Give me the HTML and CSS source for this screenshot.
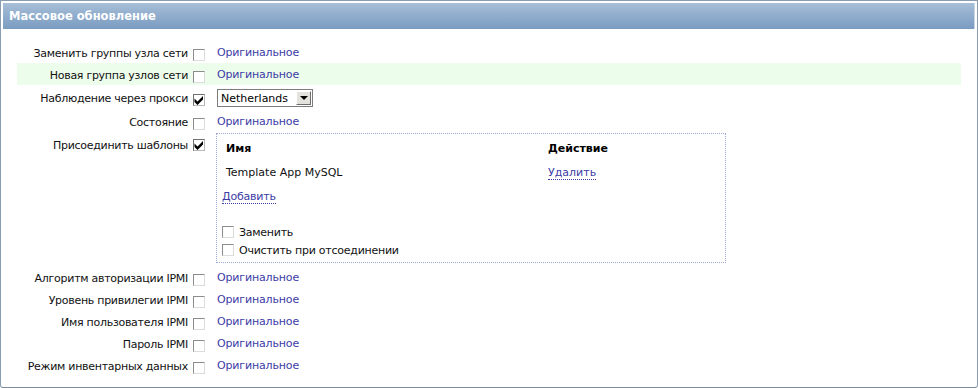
FILE: index.html
```html
<!DOCTYPE html>
<html lang="ru">
<head>
    <meta charset="UTF-8">
    <title>Массовое обновление</title>
    <link rel="stylesheet" href="styles.css">
</head>
<body>
    <div class="frame">
        <div class="header">Массовое обновление</div>
        <div class="form">
            <div class="row">
                <div class="label">Заменить группы узла сети</div>
                <span class="cb"></span>
                <a href="#" class="val">Оригинальное</a>
            </div>
            <div class="row alt">
                <div class="label">Новая группа узлов сети</div>
                <span class="cb"></span>
                <a href="#" class="val">Оригинальное</a>
            </div>
            <div class="row tall">
                <div class="label">Наблюдение через прокси</div>
                <span class="cb checked">
                    <svg width="12" height="12" viewBox="0 0 12 12"><path d="M1.5 4.5 L4.5 7.5 L10 2 L10 5.5 L4.5 11 L1.5 8 Z" fill="#000"/></svg>
                </span>
                <div class="select">
                    <span class="select-text">Netherlands</span>
                    <span class="arrow"><i></i></span>
                </div>
            </div>
            <div class="row tall">
                <div class="label">Состояние</div>
                <span class="cb"></span>
                <a href="#" class="val">Оригинальное</a>
            </div>
            <div class="row top">
                <div class="label">Присоединить шаблоны</div>
                <span class="cb checked">
                    <svg width="12" height="12" viewBox="0 0 12 12"><path d="M1.5 4.5 L4.5 7.5 L10 2 L10 5.5 L4.5 11 L1.5 8 Z" fill="#000"/></svg>
                </span>
                <div class="tpl-box">
                    <div class="tpl-row tpl-head">
                        <span>Имя</span>
                        <span>Действие</span>
                    </div>
                    <div class="tpl-row tpl-data">
                        <span>Template App MySQL</span>
                        <span><a href="#" class="link">Удалить</a></span>
                    </div>
                    <div class="tpl-add"><a href="#" class="link">Добавить</a></div>
                    <div class="tpl-check"><span class="cb"></span>Заменить</div>
                    <div class="tpl-check"><span class="cb"></span>Очистить при отсоединении</div>
                </div>
            </div>
            <div class="row">
                <div class="label">Алгоритм авторизации IPMI</div>
                <span class="cb"></span>
                <a href="#" class="val">Оригинальное</a>
            </div>
            <div class="row">
                <div class="label">Уровень привилегии IPMI</div>
                <span class="cb"></span>
                <a href="#" class="val">Оригинальное</a>
            </div>
            <div class="row">
                <div class="label">Имя пользователя IPMI</div>
                <span class="cb"></span>
                <a href="#" class="val">Оригинальное</a>
            </div>
            <div class="row">
                <div class="label">Пароль IPMI</div>
                <span class="cb"></span>
                <a href="#" class="val">Оригинальное</a>
            </div>
            <div class="row">
                <div class="label">Режим инвентарных данных</div>
                <span class="cb"></span>
                <a href="#" class="val">Оригинальное</a>
            </div>
        </div>
    </div>
</body>
</html>
```

FILE: styles.css
```css
body {
    margin: 0;
    font-family: "DejaVu Sans", Verdana, sans-serif;
    font-size: 11px;
    color: #111;
    background: #fff;
}
.frame {
    width: 978px;
    height: 388px;
    box-sizing: border-box;
    border: 1px solid #8a9cb0;
    border-bottom-color: #7d8a97;
    border-radius: 0 0 3px 3px;
    padding: 2px;
}
.header {
    height: 26px;
    line-height: 26px;
    padding-left: 6px;
    color: #fff;
    font-weight: bold;
    font-size: 11.5px;
    background: linear-gradient(to bottom, #a8bfd7 0%, #92aece 45%, #7a9cc1 100%);
    border-right: 1px solid #c9d6e4;
}
.form {
    padding: 12px 14px 0 14px;
}
.row {
    display: flex;
    align-items: center;
    height: 22px;
}
.row.alt {
    background: #edfdeb;
}
.row.tall {
    height: 24px;
}
.row.top {
    align-items: flex-start;
    height: 133px;
}
.label {
    width: 176px;
    box-sizing: border-box;
    padding-right: 5px;
    padding-top: 2px;
    text-align: right;
    white-space: nowrap;
    letter-spacing: -0.28px;
}
.row.top .label {
    padding-top: 6px;
}
.row.top > .cb {
    margin-top: 6px;
}
.cb {
    display: inline-block;
    width: 12px;
    height: 12px;
    box-sizing: border-box;
    background: #fff;
    border: 1px solid;
    border-color: #8c8c8c #dcdcdc #dcdcdc #8c8c8c;
    margin-top: 5px;
    flex-shrink: 0;
}
.cb.checked {
    border-color: #6f6f6f #b8b8b8 #b8b8b8 #6f6f6f;
}
.cb.checked svg {
    display: block;
    margin: -1px 0 0 -1px;
}
.val {
    margin-left: 12px;
    color: #3c3ca6;
    text-decoration: none;
    margin-top: 1px;
    letter-spacing: -0.15px;
}
.link {
    color: #3c3ca6;
    text-decoration: none;
    border-bottom: 1px dotted #3c3ca6;
}
.select {
    margin-left: 12px;
    width: 96px;
    height: 18px;
    box-sizing: border-box;
    border: 1px solid #7c7c7c;
    display: flex;
    align-items: center;
    margin-top: 2px;
    background: #fff;
}
.select-text {
    flex: 1;
    padding-left: 3px;
    color: #000;
}
.arrow {
    width: 15px;
    height: 14px;
    box-sizing: border-box;
    margin-right: 1px;
    background: #e4e2dc;
    border: 1px solid;
    border-color: #fff #6e6e6e #6e6e6e #fff;
    display: flex;
    align-items: center;
    justify-content: center;
}
.arrow i {
    width: 0;
    height: 0;
    border-left: 4px solid transparent;
    border-right: 4px solid transparent;
    border-top: 4px solid #000;
}
.tpl-box {
    margin-left: 11px;
    width: 510px;
    height: 130px;
    box-sizing: border-box;
    border: 1px dotted #9ea9d8;
    padding-top: 1px;
}
.tpl-row {
    display: grid;
    grid-template-columns: 322px auto;
    padding-left: 9px;
    align-items: center;
}
.tpl-head {
    height: 26px;
    font-weight: bold;
    color: #000;
}
.tpl-data {
    height: 22px;
}
.tpl-add {
    height: 28px;
    line-height: 28px;
    padding-left: 5px;
    letter-spacing: -0.2px;
}
.tpl-check {
    display: flex;
    align-items: center;
    height: 18px;
    padding-left: 5px;
    letter-spacing: -0.25px;
}
.tpl-add + .tpl-check {
    margin-top: 12px;
}
.tpl-check .cb {
    margin: 0 5px 0 0;
}
```
